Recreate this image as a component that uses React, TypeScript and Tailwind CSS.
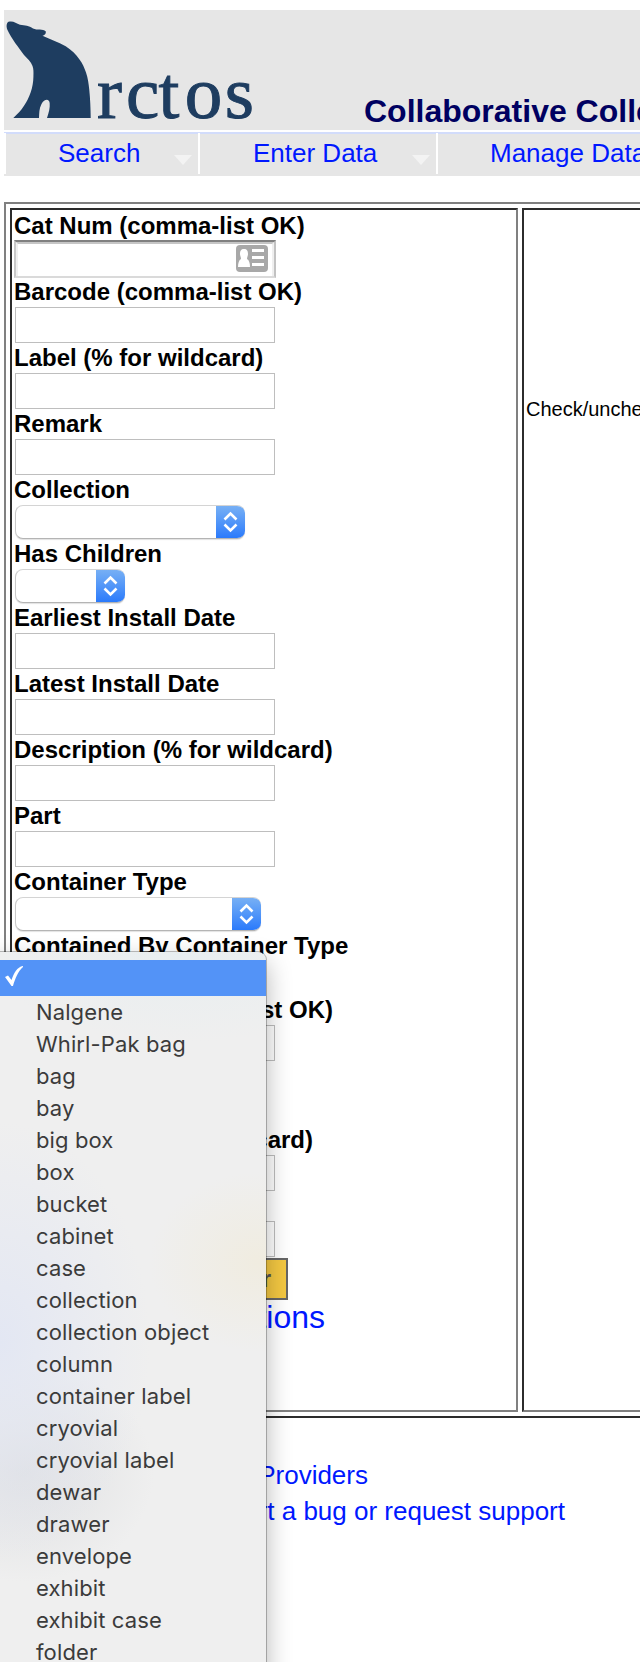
import type { ReactNode } from "react";

const containerTypes = [
  "Nalgene", "Whirl-Pak bag", "bag", "bay", "big box", "box", "bucket", "cabinet", "case",
  "collection", "collection object", "column", "container label", "cryovial", "cryovial label",
  "dewar", "drawer", "envelope", "exhibit", "exhibit case", "folder",
];

function Logo() {
  return (
    <svg className="block h-[120px] w-[260px] shrink-0" viewBox="4 10 260 120" fill="#1e3d60">
      <path d="M8.500 21.800 C13 20.500 16 23 20 24.800 C25 25.500 29 25.500 33 28.500 C37 30.500 43 28.500 45.700 31.300 C46.300 34 44.500 35.200 42.500 35.700 C50 39.500 58 41.500 65.700 46.300 C71.500 50 76 54.500 79.500 59.500 C82.500 63.500 84.500 68 86 72.500 C88 78 88.600 84 89.200 89 C90.200 99 90.600 108 90.700 118 H47 C49 112 50 108 49.700 103.500 C49.500 98.500 44.500 98.500 41.500 104 C39 109 39.300 113 39 118 H13.300 C17.500 114 21 110.500 24 105.700 C27 101.500 29 97 30.700 92.300 C32.500 87 33.300 82 33.400 77 C33.600 72 33.600 69 32.500 66 C31 61.500 27.500 59 24 55 C19 48 11 38 7.500 30 C6 26.500 6.500 23 8.500 21.800 Z" />
      <text y="117.500" x="97 126 158.500 184.800 224.800" fontFamily="Liberation Serif, serif" fontSize="75" stroke="#1e3d60" strokeWidth="1">rctos</text>
    </svg>
  );
}

function Arrow() {
  return (
    <svg className="mt-[22px] mr-[5px] h-[11px] w-5 shrink-0" viewBox="0 0 20 11" fill="#f3f3f3">
      <path d="M1 0H19L10 10Z" />
    </svg>
  );
}

function Field({ label, children, labelWidth = "" }: { label: string; children: ReactNode; labelWidth?: string }) {
  return (
    <div>
      <div className={`h-7 text-2xl leading-7 font-bold whitespace-nowrap ${labelWidth}`}>{label}</div>
      {children}
    </div>
  );
}

function TextBox() {
  return <div className="m-px h-9 w-[260px] border border-[#bebebe] bg-white" />;
}

function Select({ width }: { width: string }) {
  return (
    <div className="h-9 p-px">
      <div className={`flex h-[34px] justify-end overflow-hidden rounded-lg border border-t-[#d4d4d4] border-r-0 border-b-[#b4b4b4] border-l-[#c8c8c8] bg-white shadow-[0_1px_1px_rgba(0,0,0,0.12)] ${width}`}>
        <div className="-my-px flex w-[29px] items-center justify-center border-b border-[#1668fb] bg-gradient-to-b from-[#79b1f4] to-[#2a7afb]">
          <svg className="h-[22px] w-[15px]" viewBox="0 0 15 22" fill="none" stroke="white" strokeWidth="2.600">
            <path d="M1.500 8.500 7.500 2.500 13.500 8.500M1.500 13.500 7.500 19.500 13.500 13.500" />
          </svg>
        </div>
      </div>
    </div>
  );
}

export default function App() {
  return (
    <div className="relative h-[1662px] w-[640px] overflow-hidden bg-white pt-[10px] pl-1 font-['Liberation_Sans',Arial,sans-serif] text-black">
      <header className="flex h-[120px] items-end bg-[#e6e6e6]">
        <Logo />
        <h1 className="ml-[100px] text-[32px] leading-[38px] font-bold whitespace-nowrap text-[#000061]">Collaborative Collections</h1>
      </header>
      <nav className="mt-[2px] h-11 overflow-hidden bg-[#e6e6e6]">
        <div className="h-[2px] bg-[#d2dcfb]" />
        <div className="-mt-px flex h-[41px] text-[26px] leading-10 whitespace-nowrap text-[#0018ff]">
          <div className="flex w-[194px] shrink-0 border-l-2 border-white">
            <span className="grow pl-[52px]">Search</span>
            <Arrow />
          </div>
          <div className="flex w-[238px] shrink-0 border-l-2 border-white">
            <span className="grow pl-[53px]">Enter Data</span>
            <Arrow />
          </div>
          <div className="flex w-[260px] shrink-0 border-l-2 border-white">
            <span className="grow pl-[52px]">Manage Data</span>
          </div>
        </div>
      </nav>

      <main className="mt-[26px] flex h-[1216px] w-[900px] gap-1 border-2 border-t-[#808080] border-r-[#2c2c2c] border-b-[#2c2c2c] border-l-[#808080] p-1">
        <section className="w-[508px] shrink-0 border-2 border-t-[#2c2c2c] border-r-[#808080] border-b-[#808080] border-l-[#2c2c2c] p-[2px]">
          <Field label="Cat Num (comma-list OK)">
            <div className="h-[38px] w-[262px] border-2 border-t-[#808080] border-r-[#c2c2c2] border-b-[#dadada] border-l-[#c8c8c8]">
              <div className="flex h-full justify-end border-x-2 border-t-2 border-x-[#efefef] border-t-[#c6c6c6] pt-px pr-1">
                <svg className="h-[27px] w-8" viewBox="0 0 32 27">
                  <rect width="32" height="27" rx="4" fill="#a8a8a8" />
                  <path d="M8 4C11 4 12 6 12 9C12 11 11 12 11 14C13 15 14 18 14 22H2C2 18 3 15 5 14C5 12 4 11 4 9C4 6 5 4 8 4ZM16 4H28V7H16ZM16 11H28V14H16ZM16 18H28V21H16Z" fill="white" />
                </svg>
              </div>
            </div>
          </Field>
          <Field label="Barcode (comma-list OK)"><TextBox /></Field>
          <Field label="Label (% for wildcard)"><TextBox /></Field>
          <Field label="Remark"><TextBox /></Field>
          <Field label="Collection"><Select width="w-[230px]" /></Field>
          <Field label="Has Children"><Select width="w-[110px]" /></Field>
          <Field label="Earliest Install Date"><TextBox /></Field>
          <Field label="Latest Install Date"><TextBox /></Field>
          <Field label="Description (% for wildcard)"><TextBox /></Field>
          <Field label="Part"><TextBox /></Field>
          <Field label="Container Type"><Select width="w-[246px]" /></Field>
          <Field label="Contained By Container Type"><Select width="w-[246px]" /></Field>
          <Field label="In Barcode (comma-list OK)" labelWidth="w-[319px] text-right"><TextBox /></Field>
          <div className="h-16" />
          <Field label="In Label (% for wildcard)" labelWidth="w-[299px] text-right"><TextBox /></Field>
          <div className="h-7" />
          <TextBox />
          <div className="flex h-[42px] w-[274px] items-center justify-end border-2 border-[#666] bg-[#f4c842] pr-[15px] text-2xl font-bold text-[#555]">Clear</div>
          <div className="-mt-px w-[311px] text-right text-[32px] leading-[36px] text-[#0018ff]">Collections</div>
        </section>
        <section className="w-[376px] shrink-0 border-2 border-t-[#2c2c2c] border-r-[#808080] border-b-[#808080] border-l-[#2c2c2c] pt-[187px] pl-[2px]">
          <p className="text-[20px] leading-6 whitespace-nowrap">Check/uncheck all</p>
        </section>
      </main>
      <footer className="mt-[39px] text-[26px] leading-9 whitespace-nowrap text-[#0018ff]">
        <div className="w-[364px] text-right">Data Providers</div>
        <div className="w-[561px] text-right">Report a bug or request support</div>
      </footer>

      <div className="absolute top-[952px] -left-4 h-[740px] w-[282px] rounded-tr-lg bg-[#efefef] bg-[radial-gradient(ellipse_150px_220px_at_16px_390px,#e3e7f3,transparent),radial-gradient(ellipse_130px_110px_at_40px_520px,#dfe0e2,transparent),radial-gradient(ellipse_110px_90px_at_275px_310px,#f0ece0,transparent),radial-gradient(ellipse_200px_90px_at_200px_0px,#e8eef0,transparent)] pt-2 shadow-[0_0_0_1px_rgba(0,0,0,0.25),0_10px_26px_rgba(0,0,0,0.3)]">
        <div className="flex h-9 items-center bg-[#5393f7] pl-[21px]">
          <svg className="-mt-1 h-[21px] w-[18px]" viewBox="0 0 18 21" fill="white">
            <path d="M0 11 3 9.500 6.500 14C9 7 12 1 18 0V1C13 5 10 13 8 20H6.500Z" />
          </svg>
        </div>
        <ul className="pl-[52px] font-[Inter,sans-serif] text-[22px] leading-8 tracking-[0.12px] text-[#3b3b3b]">
          {containerTypes.map((name) => (
            <li key={name} className="h-8 whitespace-nowrap">{name}</li>
          ))}
        </ul>
      </div>
    </div>
  );
}
